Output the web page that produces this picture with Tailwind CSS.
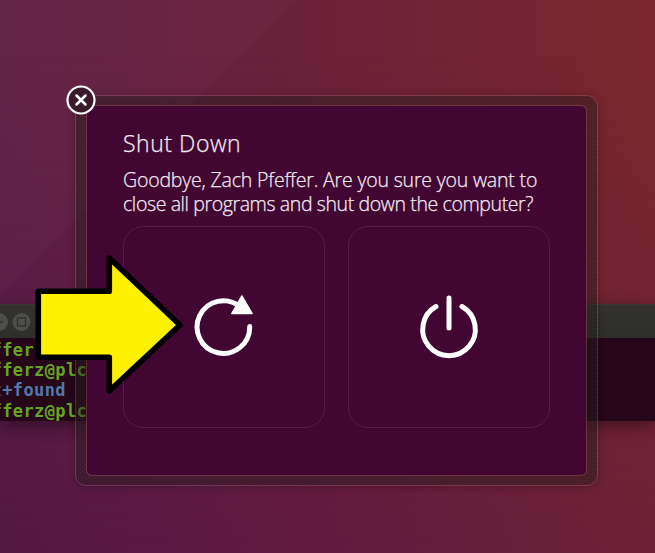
<!DOCTYPE html>
<html lang="en">
<head>
<meta charset="utf-8">
<title>Shut Down</title>
<script src="https://cdn.jsdelivr.net/npm/@tailwindcss/browser@4"></script>
</head>
<body class="overflow-hidden bg-[#642040]">
<main class="relative h-[553px] w-[655px] overflow-hidden">
  <!-- Wallpaper -->
  <svg class="absolute inset-0" width="655" height="553" viewBox="0 0 655 553" aria-hidden="true">
    <defs>
      <linearGradient id="top" x1="0" x2="1" y1="0" y2="0"><stop offset="0" stop-color="#602145"/><stop offset=".5" stop-color="#6b2138"/><stop offset="1" stop-color="#7c272e"/></linearGradient>
      <linearGradient id="bottom" x1="0" x2="1" y1="0" y2="0"><stop offset="0" stop-color="#541845"/><stop offset=".5" stop-color="#611b3f"/><stop offset="1" stop-color="#6c2136"/></linearGradient>
      <linearGradient id="fade" x1="0" x2="0" y1="0" y2="1"><stop offset=".1" stop-color="#000"/><stop offset="1" stop-color="#fff"/></linearGradient>
      <mask id="m"><rect width="655" height="553" fill="url(#fade)"/></mask>
    </defs>
    <rect width="655" height="553" fill="url(#top)"/>
    <rect width="655" height="553" fill="url(#bottom)" mask="url(#m)"/>
    <path d="M0 0H296L0 295Z" fill="#fff" fill-opacity=".015"/>
  </svg>

  <!-- Terminal window -->
  <section class="absolute top-[304px] left-0 flex h-[117px] w-[655px] flex-col bg-[#260619] shadow-[0_5px_16px_rgba(0,0,0,0.42)]">
    <div class="flex h-[33.5px] shrink-0 items-center gap-[3px] border-t border-[#3a3935] bg-linear-to-b from-[#33322e] to-[#2e2e2a] pt-px">
      <svg class="-ml-[11px] shrink-0" width="20" height="20" viewBox="0 0 20 20" aria-hidden="true"><circle cx="10" cy="10" r="9" fill="#4e4d49"/><path d="M6 10h8" stroke="#2f2f2c" stroke-width="1.3"/></svg>
      <svg class="shrink-0" width="20" height="20" viewBox="0 0 20 20" aria-hidden="true"><circle cx="9.5" cy="10" r="9" fill="#4e4d49"/><rect x="5.5" y="6" width="8" height="8" fill="none" stroke="#2f2f2c" stroke-width="1.3"/></svg>
    </div>
    <div class="-ml-[8.5px] pt-[2px] font-['DejaVu_Sans_Mono',monospace] text-[17px] leading-[20.4px] font-bold tracking-[0.4px] whitespace-nowrap text-[#65a522]">
      <p>ffer</p>
      <p>fferz@plc</p>
      <p class="text-[#5079ab]">t+found</p>
      <p>fferz@plc</p>
    </div>
  </section>

  <!-- Session dialog -->
  <section class="absolute top-[95px] left-[75px] h-[391px] w-[523px] rounded-[11px] border border-[#c08080]/25 p-[9px] pl-[10px] pr-[10px] shadow-[0_1px_7px_rgba(0,0,0,0.25)]">
    <svg class="absolute inset-0 h-full w-full rounded-[10px]" aria-hidden="true">
      <defs><pattern id="dots" width="4" height="4" patternUnits="userSpaceOnUse"><rect width="4" height="4" fill="#201818" fill-opacity=".46"/><path d="M0 0h1v1h-1zM2 2h1v1h-1z" fill="#fff" fill-opacity=".07"/></pattern></defs>
      <rect width="100%" height="100%" fill="url(#dots)"/>
    </svg>
    <div class="relative flex h-full flex-col rounded-[6px] border border-[#b05a5a]/40 bg-[#410632] bg-clip-padding px-[36px] pt-[21px] font-['Open_Sans','Noto_Sans',sans-serif] font-light text-[#f3e9f0] [-webkit-text-stroke:0.25px_#f3e9f0]">
      <h1 class="h-[32px] text-[23px] leading-[32px] tracking-[0.55px] whitespace-nowrap">Shut Down</h1>
      <div class="mt-[9px] h-[48px] text-[19.5px] leading-[24px] whitespace-nowrap"><p class="tracking-[-0.18px]">Goodbye, Zach Pfeffer. Are you sure you want to</p><p class="tracking-[-0.39px]">close all programs and shut down the computer?</p></div>
      <div class="mt-[10px] flex gap-[23px]">
        <button aria-label="Restart" class="flex h-[202px] w-[202px] shrink-0 items-center justify-center rounded-[20px] border-[1.5px] border-[#571b47]">
          <svg width="64" height="64" viewBox="0 1 64 64" fill="none"><path d="M48 12.7A26.3 26.3 0 1 0 57.7 32.6" stroke="#fff" stroke-width="5" stroke-linecap="round"/><path d="M49.8 2L60 19.5H39.8Z" fill="#fff" stroke="#fff" stroke-width="1.5" stroke-linejoin="round"/></svg>
        </button>
        <button aria-label="Shut down" class="flex h-[202px] w-[202px] shrink-0 items-center justify-center rounded-[20px] border-[1.5px] border-[#571b47]">
          <svg width="64" height="64" viewBox="-.5 1 64 64" fill="none" stroke="#fff" stroke-width="5" stroke-linecap="round"><path d="M31.5 4V34M18.5 12.5A26.3 26.3 0 1 0 44.5 12.5"/></svg>
        </button>
      </div>
    </div>
    <button aria-label="Close" class="absolute -top-[11px] -left-[10px]">
      <svg width="30" height="30" viewBox="0 0 30 30" fill="none" stroke="#fff"><circle cx="15" cy="15" r="13.5" fill="#3b1a2b" stroke-width="2.2"/><path d="M10.5 10.5L19.5 19.5M19.5 10.5L10.5 19.5" stroke-width="2.5" stroke-linecap="round"/></svg>
    </button>
  </section>

  <!-- Callout arrow -->
  <svg class="absolute top-[250px] left-[30px]" width="160" height="150" viewBox="30 250 160 150" aria-hidden="true"><path d="M38.3 291.3H109.3V258L180 325L109.3 391V357.3H38.3Z" fill="#fff200" stroke="#000" stroke-width="5.6" stroke-linejoin="round"/></svg>
</main>
</body>
</html>
